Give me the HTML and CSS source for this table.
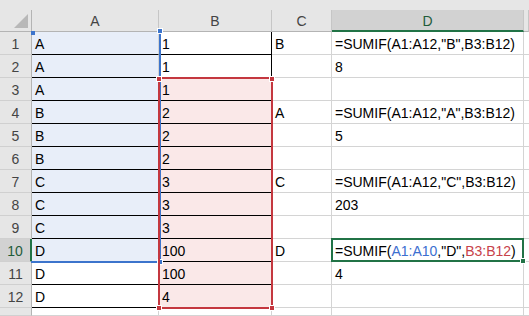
FILE: index.html
```html
<!DOCTYPE html>
<html lang="en">
  <head>
    <meta charset="UTF-8" />
    <title>SUMIF</title>
    <link rel="stylesheet" href="styles.css">
  </head>
  <body>
    <div class="sheet">
      <div class="strip"></div>

      <!-- column headers -->
      <div class="hd corner"><span class="tri"></span></div>
      <div class="hd">A</div>
      <div class="hd">B</div>
      <div class="hd">C</div>
      <div class="hd on">D</div>
      <div class="hd"></div>

      <!-- rows -->
      <div class="rh">1</div>
      <div class="c ab fa">A</div>
      <div class="c ab br">1</div>
      <div class="c">B</div>
      <div class="c">=SUMIF(A1:A12,"B",B3:B12)</div>
      <div class="c"></div>

      <div class="rh">2</div>
      <div class="c ab fa">A</div>
      <div class="c ab br">1</div>
      <div class="c"></div>
      <div class="c">8</div>
      <div class="c"></div>

      <div class="rh">3</div>
      <div class="c ab fa">A</div>
      <div class="c ab br fb">1</div>
      <div class="c"></div>
      <div class="c"></div>
      <div class="c"></div>

      <div class="rh">4</div>
      <div class="c ab fa">B</div>
      <div class="c ab br fb">2</div>
      <div class="c">A</div>
      <div class="c">=SUMIF(A1:A12,"A",B3:B12)</div>
      <div class="c"></div>

      <div class="rh">5</div>
      <div class="c ab fa">B</div>
      <div class="c ab br fb">2</div>
      <div class="c"></div>
      <div class="c">5</div>
      <div class="c"></div>

      <div class="rh">6</div>
      <div class="c ab fa">B</div>
      <div class="c ab br fb">2</div>
      <div class="c"></div>
      <div class="c"></div>
      <div class="c"></div>

      <div class="rh">7</div>
      <div class="c ab fa">C</div>
      <div class="c ab br fb">3</div>
      <div class="c">C</div>
      <div class="c">=SUMIF(A1:A12,"C",B3:B12)</div>
      <div class="c"></div>

      <div class="rh">8</div>
      <div class="c ab fa">C</div>
      <div class="c ab br fb">3</div>
      <div class="c"></div>
      <div class="c">203</div>
      <div class="c"></div>

      <div class="rh">9</div>
      <div class="c ab fa">C</div>
      <div class="c ab br fb">3</div>
      <div class="c"></div>
      <div class="c"></div>
      <div class="c"></div>

      <div class="rh on">10</div>
      <div class="c ab fa">D</div>
      <div class="c ab br fb">100</div>
      <div class="c">D</div>
      <div class="c">=SUMIF(<span class="ref-a">A1:A10</span>,"D",<span class="ref-b">B3:B12</span>)</div>
      <div class="c"></div>

      <div class="rh">11</div>
      <div class="c ab">D</div>
      <div class="c ab br fb">100</div>
      <div class="c"></div>
      <div class="c">4</div>
      <div class="c"></div>

      <div class="rh">12</div>
      <div class="c ab">D</div>
      <div class="c ab br fb">4</div>
      <div class="c"></div>
      <div class="c"></div>
      <div class="c"></div>

      <div class="rh"></div>
      <div class="c"></div>
      <div class="c"></div>
      <div class="c"></div>
      <div class="c"></div>
      <div class="c"></div>

      <!-- range highlights over the grid -->
      <div class="range blue">
        <i class="hdl tl"></i><i class="hdl tr"></i><i class="hdl br-h"></i>
      </div>
      <div class="range red">
        <i class="hdl tl"></i><i class="hdl tr"></i><i class="hdl bl"></i><i class="hdl br-h"></i>
      </div>
      <div class="active"><i class="fill"></i></div>
    </div>
  </body>
</html>
```

FILE: styles.css
```css
* {
  margin: 0;
  padding: 0;
  box-sizing: border-box;
}

body {
  background: #fff;
  font-family: "Segoe UI", "Liberation Sans", Arial, sans-serif;
  font-size: 14px;
  color: #000;
  overflow: hidden;
}

.sheet {
  position: relative;
  display: grid;
  grid-template-columns: 32px 127px 113px 60px 192px 5px;
  grid-template-rows: 10px 22px repeat(12, 23px) 1fr;
  width: 529px;
  height: 316px;
}

.strip {
  grid-column: 1 / -1;
  background: #e6e6e6;
}

/* headers */
.hd {
  background: #e6e6e6;
  border-right: 1px solid #c6c6c6;
  border-bottom: 1px solid #b4b4b4;
  color: #444;
  display: flex;
  align-items: center;
  justify-content: center;
  padding-top: 1px;
}
.hd.on {
  background: #d2d2d2;
  color: #1f5c3a;
  border-bottom: 2px solid #217346;
}
.corner {
  position: relative;
  border-right-color: #b4b4b4;
}
.tri {
  position: absolute;
  right: 3px;
  bottom: 3px;
  width: 0;
  height: 0;
  border-left: 14px solid transparent;
  border-bottom: 14px solid #b8b8b8;
}

.rh {
  background: #e6e6e6;
  border-right: 1px solid #b4b4b4;
  border-bottom: 1px solid #d0d0d0;
  color: #444;
  display: flex;
  align-items: flex-end;
  justify-content: center;
  padding-bottom: 2px;
}
.rh.on {
  background: #d2d2d2;
  color: #1f5c3a;
  border-right: 2px solid #217346;
}

/* cells */
.c {
  border-right: 1px solid #d4d4d4;
  border-bottom: 1px solid #d4d4d4;
  display: flex;
  align-items: flex-end;
  padding: 0 3px 2px;
  white-space: nowrap;
  overflow: hidden;
}
.c.ab {
  border-bottom-color: #000;
}
.c.br {
  border-right-color: #000;
}
.fa {
  background: #e8eef9;
}
.fb {
  background: #fae8e8;
}

.ref-a {
  color: #3c6fd0;
}
.ref-b {
  color: #c8424a;
}

/* highlights */
.range {
  position: absolute;
  pointer-events: none;
}
.range.blue {
  left: 31px;
  top: 31px;
  width: 130px;
  height: 232px;
  border-right: 2px solid #3c74cc;
  border-bottom: 2px solid #3c74cc;
}
.range.red {
  left: 158px;
  top: 77px;
  width: 115px;
  height: 232px;
  border: 2px solid #c4373f;
}
.hdl {
  position: absolute;
  width: 6px;
  height: 6px;
  border: 1px solid #fff;
}
.blue .hdl {
  background: #3c74cc;
}
.red .hdl {
  background: #c4373f;
}
.blue .tl {
  left: 0;
  top: 0;
  width: 4px;
  height: 4px;
  border: 0;
}
.blue .tr {
  right: -4px;
  top: -3px;
}
.blue .br-h {
  right: -4px;
  bottom: -4px;
}
.red .tl {
  left: -4px;
  top: -3px;
}
.red .tr {
  right: -4px;
  top: -3px;
}
.red .bl {
  left: -4px;
  bottom: -4px;
}
.red .br-h {
  right: -4px;
  bottom: -4px;
}

.active {
  position: absolute;
  left: 331px;
  top: 238px;
  width: 193px;
  height: 24px;
  border: 2px solid #217346;
}
.active .fill {
  position: absolute;
  right: -4px;
  bottom: -4px;
  width: 6px;
  height: 6px;
  background: #217346;
  border: 1px solid #fff;
}
```
